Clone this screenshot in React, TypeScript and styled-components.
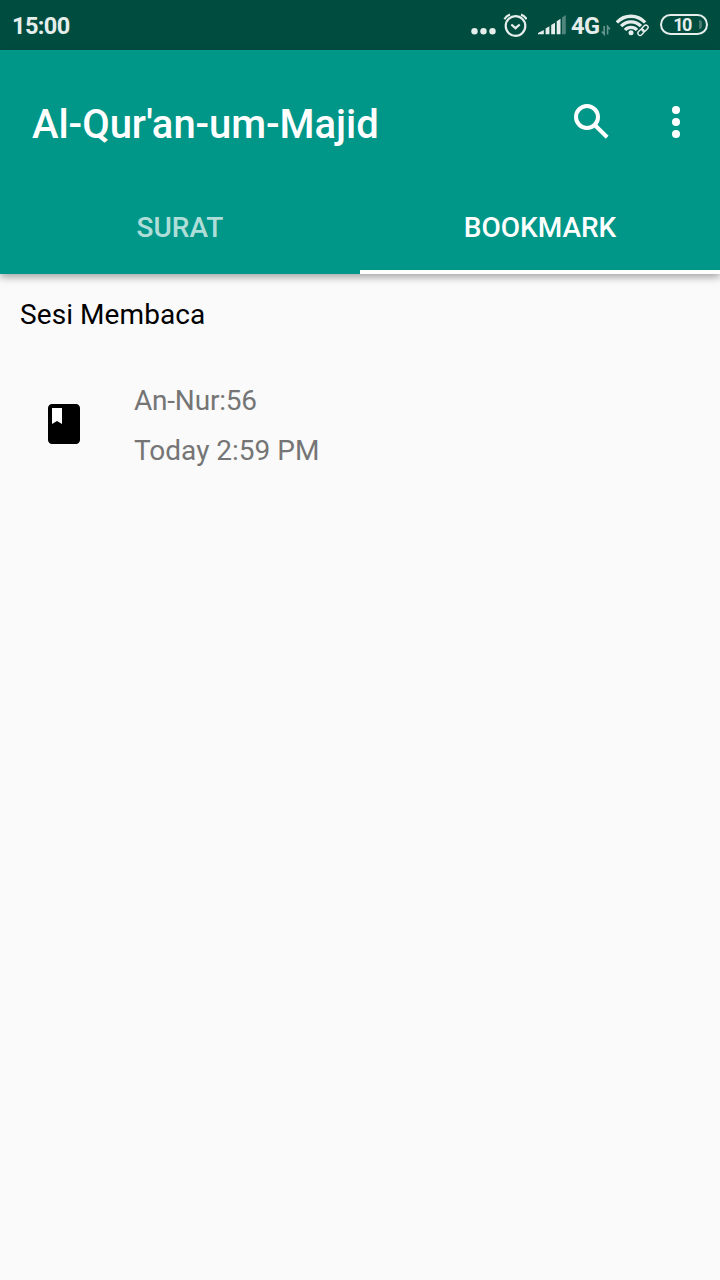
import React from "react";
import styled, { createGlobalStyle } from "styled-components";

const GlobalStyle = createGlobalStyle`
  * { box-sizing: border-box; }
  body { margin: 0; background: #fafafa; font-family: Roboto, "Liberation Sans", sans-serif; }
`;

const Screen = styled.div`
  width: 720px;
  height: 1280px;
  display: flex;
  flex-direction: column;
  background: #fafafa;
  overflow: hidden;
`;

const StatusBar = styled.div`
  height: 50px;
  padding: 2px 12px 0;
  display: flex;
  align-items: center;
  justify-content: space-between;
  background: #004d40;
  color: #e6eeec;
`;

const StatusText = styled.span<{ $width: number }>`
  width: ${(p) => p.$width}px;
  font-size: 23.5px;
  line-height: 48px;
  font-weight: 700;
  letter-spacing: -0.6px;
  white-space: nowrap;
`;

const StatusIcons = styled.div`
  display: flex;
  align-items: center;
`;

const StatusIcon = styled.svg<{ $gap?: number }>`
  display: block;
  height: 48px;
  margin-right: ${(p) => p.$gap ?? 0}px;
`;

const Battery = styled.div`
  width: 48px;
  height: 21px;
  margin-bottom: 3px;
  border: 2px solid #e6eeec;
  border-radius: 11px;
  display: flex;
  align-items: center;
  justify-content: flex-end;
  padding-right: 4px;
`;

const BatteryLevel = styled.span`
  font-size: 18px;
  line-height: 18px;
  font-weight: 700;
  letter-spacing: -1.4px;
  margin-right: 8px;
`;

const BatteryTip = styled.span`
  width: 3px;
  height: 9px;
  border-radius: 0 3px 3px 0;
  background: #4a7b71;
`;

const AppBar = styled.header`
  height: 224px;
  background: #009688;
  color: #fff;
  box-shadow: 0 3px 8px rgba(0, 0, 0, 0.36);
`;

const Toolbar = styled.div`
  height: 128px;
  padding: 16px 20px 0 32px;
  display: flex;
  align-items: center;
`;

const Title = styled.h1`
  flex: 1;
  margin: 6px 0 0;
  font-size: 40px;
  line-height: 48px;
  font-weight: 500;
  letter-spacing: -0.06px;
`;

const IconButton = styled.button<{ $width: number }>`
  width: ${(p) => p.$width}px;
  height: 48px;
  padding: 0;
  border: 0;
  background: none;
  color: inherit;
  display: flex;
  justify-content: center;
  svg { display: block; }
`;

const Tabs = styled.nav`
  display: flex;
  height: 96px;
`;

const Tab = styled.div<{ $active?: boolean }>`
  flex: 1;
  display: flex;
  align-items: center;
  justify-content: center;
  padding-top: 8px;
  border-bottom: 4px solid ${(p) => (p.$active ? "#fff" : "transparent")};
  font-size: 28px;
  line-height: 32px;
  font-weight: 500;
  color: ${(p) => (p.$active ? "#fff" : "rgba(255,255,255,0.7)")};
`;

const Content = styled.main`
  padding: 21px 20px 0;
`;

const SectionTitle = styled.h2`
  margin: 0;
  font-size: 28px;
  line-height: 40px;
  font-weight: 400;
  letter-spacing: 0.08px;
  color: #000;
`;

const BookmarkRow = styled.div`
  margin-top: 41px;
  padding-left: 20px;
  display: flex;
  align-items: center;
  gap: 46px;
`;

const BookIcon = styled.svg`
  display: block;
  margin-bottom: 4px;
`;

const RowText = styled.div`
  display: flex;
  flex-direction: column;
`;

const RowLine = styled.span<{ $tracking?: number }>`
  font-size: 28px;
  line-height: 50px;
  letter-spacing: ${(p) => p.$tracking ?? 0}px;
  color: #757575;
`;

export default function App() {
  return (
    <Screen>
      <GlobalStyle />
      <StatusBar>
        <StatusText $width={60}>15:00</StatusText>
        <StatusIcons>
          <StatusIcon width="26" viewBox="0 0 26 48" $gap={5} fill="currentColor">
            <circle cx="4.5" cy="29.3" r="3.2" />
            <circle cx="13.5" cy="29.3" r="3.2" />
            <circle cx="22.5" cy="29.3" r="3.2" />
          </StatusIcon>
          <StatusIcon width="26" viewBox="0 0 26 48" $gap={11} fill="none" stroke="currentColor" strokeWidth="2.2">
            <circle cx="14.5" cy="24" r="9.8" />
            <path d="M10.3 22.5l4.2 3.7 4.2-3.7" />
            <path d="M3.4 17.2Q5.3 13.8 9 12.6M25.6 17.2Q23.7 13.8 20 12.6" />
          </StatusIcon>
          <StatusIcon width="28" viewBox="0 0 28 48" $gap={5} fill="currentColor">
            <path d="M0 32.3v-1.2l5.8-3.1v4.3zM7.6 32.3v-5.9l3.8-2.2v8.1zM13.2 32.3v-9.4l3.8-2.2v11.6zM18.7 32.3V19.2l3.8-2.4v15.5z" />
            <path d="M24 32.3V15.5l3.8-2.4v19.2z" opacity="0.35" />
          </StatusIcon>
          <StatusText $width={30}>4G</StatusText>
          <StatusIcon width="10" viewBox="0 0 10 48" $gap={5} fill="none" stroke="currentColor" opacity="0.45" strokeWidth="1.6">
            <path d="M3.2 24v8.2L.8 29.5M6.6 32.5v-8L9 27.2" />
          </StatusIcon>
          <StatusIcon width="33" viewBox="0 0 33 48" $gap={11} fill="none" stroke="currentColor" strokeWidth="3.3">
            <path d="M.9 20.5A19 19 0 0 1 29.1 20.5" />
            <path d="M5.1 24.2A13.4 13.4 0 0 1 24.9 24.2" />
            <path d="M9 28A8 8 0 0 1 21 28" />
            <circle cx="15" cy="30.8" r="2.5" fill="currentColor" stroke="none" />
            <path d="M23.8 31.2l6-6" stroke="#004d40" strokeWidth="7.5" />
            <g strokeWidth="1.4" transform="rotate(-45 27 28.2)">
              <rect x="20.7" y="26" width="7" height="4.4" rx="2.2" />
              <rect x="26.3" y="26" width="7" height="4.4" rx="2.2" />
            </g>
          </StatusIcon>
          <Battery>
            <BatteryLevel>10</BatteryLevel>
            <BatteryTip />
          </Battery>
        </StatusIcons>
      </StatusBar>
      <AppBar>
        <Toolbar>
          <Title>Al-Qur'an-um-Majid</Title>
          <IconButton $width={120} aria-label="Search">
            <svg width="48" height="48" viewBox="0 0 48 48" fill="none" stroke="currentColor" strokeWidth="4">
              <circle cx="19" cy="19" r="11" />
              <path d="M27 27.3l12.2 12" />
            </svg>
          </IconButton>
          <IconButton $width={48} aria-label="More options">
            <svg width="48" height="48" viewBox="0 0 48 48" fill="currentColor">
              <circle cx="24" cy="12" r="4" />
              <circle cx="24" cy="24" r="4" />
              <circle cx="24" cy="36" r="4" />
            </svg>
          </IconButton>
        </Toolbar>
        <Tabs>
          <Tab>SURAT</Tab>
          <Tab $active>BOOKMARK</Tab>
        </Tabs>
      </AppBar>
      <Content>
        <SectionTitle>Sesi Membaca</SectionTitle>
        <BookmarkRow>
          <BookIcon width="48" height="48" viewBox="0 0 24 24">
            <path d="M6 4h5v8l-2.5-1.5L6 12z" fill="#fff" />
            <path d="M18 2H6c-1.1 0-2 .9-2 2v16c0 1.1.9 2 2 2h12c1.1 0 2-.9 2-2V4c0-1.1-.9-2-2-2zM6 4h5v8l-2.5-1.5L6 12V4z" />
          </BookIcon>
          <RowText>
            <RowLine $tracking={-0.2}>An-Nur:56</RowLine>
            <RowLine>Today 2:59 PM</RowLine>
          </RowText>
        </BookmarkRow>
      </Content>
    </Screen>
  );
}
